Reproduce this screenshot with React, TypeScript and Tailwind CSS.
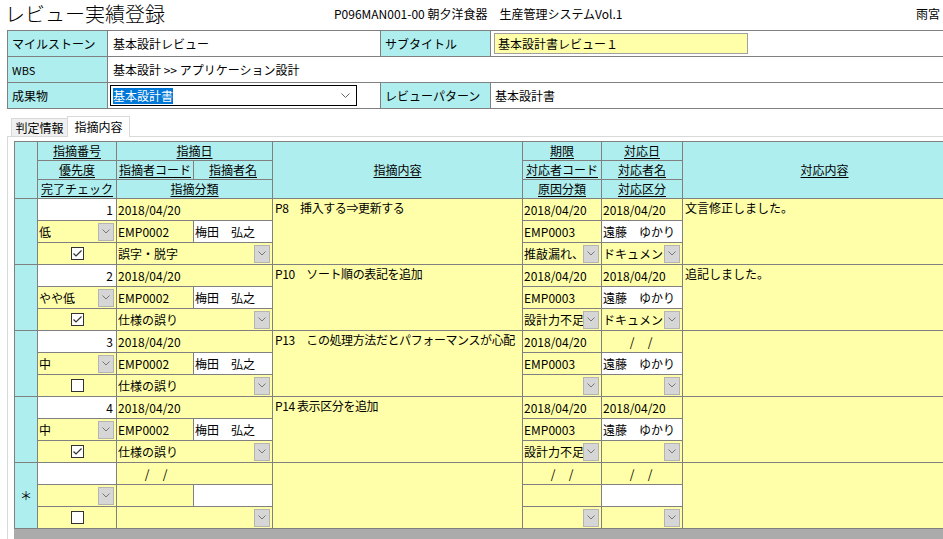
import React from 'react';

type Rec = {
  mark?: string;
  no: string;
  date: string;
  prio: string;
  code: string;
  name: string;
  done: boolean;
  cat: string;
  body: string;
  due: string;
  resDate: string;
  resCode: string;
  resName: string;
  cause: string;
  kind: string;
  answer: string;
};

const records: Rec[] = [
  {
    no: '1', date: '2018/04/20', prio: '低', code: 'EMP0002', name: '梅田　弘之', done: true, cat: '誤字・脱字',
    body: 'P8　挿入する⇒更新する', due: '2018/04/20', resDate: '2018/04/20', resCode: 'EMP0003', resName: '遠藤　ゆかり',
    cause: '推敲漏れ、', kind: 'ドキュメン', answer: '文言修正しました。',
  },
  {
    no: '2', date: '2018/04/20', prio: 'やや低', code: 'EMP0002', name: '梅田　弘之', done: true, cat: '仕様の誤り',
    body: 'P10　ソート順の表記を追加', due: '2018/04/20', resDate: '2018/04/20', resCode: 'EMP0003', resName: '遠藤　ゆかり',
    cause: '設計力不足', kind: 'ドキュメン', answer: '追記しました。',
  },
  {
    no: '3', date: '2018/04/20', prio: '中', code: 'EMP0002', name: '梅田　弘之', done: false, cat: '仕様の誤り',
    body: 'P13　この処理方法だとパフォーマンスが心配', due: '2018/04/20', resDate: '', resCode: 'EMP0003', resName: '遠藤　ゆかり',
    cause: '', kind: '', answer: '',
  },
  {
    no: '4', date: '2018/04/20', prio: '中', code: 'EMP0002', name: '梅田　弘之', done: true, cat: '仕様の誤り',
    body: 'P14 表示区分を追加', due: '2018/04/20', resDate: '2018/04/20', resCode: 'EMP0003', resName: '遠藤　ゆかり',
    cause: '設計力不足', kind: '', answer: '',
  },
  {
    mark: '＊', no: '', date: '', prio: '', code: '', name: '', done: false, cat: '',
    body: '', due: '', resDate: '', resCode: '', resName: '', cause: '', kind: '', answer: '',
  },
];

const cols = 'grid grid-cols-[22px_78px_76px_78px_249px_78px_80px_1fr] gap-px';

function DropButton() {
  return (
    <div className="w-[16px] h-[18px] shrink-0 border border-[#b4b4b4] bg-[#d6d6d6] flex items-center justify-center">
      <svg width="8" height="5" viewBox="0 0 8 5">
        <polyline points="0.5,0.5 4,4 7.5,0.5" fill="none" stroke="#777" strokeWidth="1" />
      </svg>
    </div>
  );
}

function DateText({ value }: { value: string }) {
  if (value) return <span>{value}</span>;
  return (
    <span>
      <span className="invisible">2018</span>/<span className="invisible">04</span>/
    </span>
  );
}

function Cell({ children, white, className = '' }: { children?: React.ReactNode; white?: boolean; className?: string }) {
  return (
    <div className={`${white ? 'bg-white' : 'bg-[#ffffaa]'} flex items-center px-[1px] whitespace-nowrap overflow-hidden ${className}`}>
      {children}
    </div>
  );
}

function SelectCell({ text, className = '' }: { text: string; className?: string }) {
  return (
    <div className={`bg-[#ffffaa] flex items-center pl-[1px] pr-[2px] overflow-hidden ${className}`}>
      <span className="flex-1 overflow-hidden whitespace-nowrap">{text}</span>
      <DropButton />
    </div>
  );
}

function Check({ on }: { on: boolean }) {
  return (
    <div className="w-[13px] h-[13px] border border-[#333] bg-white flex items-center justify-center">
      {on && (
        <svg width="9" height="7" viewBox="0 0 9 7">
          <polyline points="0.5,3.5 3,6 8.5,0.5" fill="none" stroke="#333" strokeWidth="1.2" />
        </svg>
      )}
    </div>
  );
}

function Head({ children, className = '' }: { children?: React.ReactNode; className?: string }) {
  return (
    <div className={`bg-[#afeeee] flex items-center justify-center ${className}`}>
      {children && <span className="underline underline-offset-2">{children}</span>}
    </div>
  );
}

function Record({ r }: { r: Rec }) {
  return (
    <div className={`${cols} grid-rows-[21px_21px_21px]`}>
      <div className="row-span-3 bg-[#afeeee] flex items-center justify-center">{r.mark}</div>
      <Cell white className="justify-end pr-[3px]">{r.no}</Cell>
      <Cell className="col-span-2">
        <DateText value={r.date} />
      </Cell>
      <div className="row-span-3 bg-[#ffffaa] px-[2px] pt-[1px] whitespace-nowrap overflow-hidden tracking-[-0.4px]">{r.body}</div>
      <Cell>
        <DateText value={r.due} />
      </Cell>
      <Cell>
        <DateText value={r.resDate} />
      </Cell>
      <div className="row-span-3 bg-[#ffffaa] px-[2px] pt-[1px] whitespace-nowrap overflow-hidden">{r.answer}</div>

      <SelectCell text={r.prio} />
      <Cell>{r.code}</Cell>
      <Cell white>{r.name}</Cell>
      <Cell>{r.resCode}</Cell>
      <Cell white>{r.resName}</Cell>

      <Cell className="justify-center">
        <Check on={r.done} />
      </Cell>
      <SelectCell text={r.cat} className="col-span-2" />
      <SelectCell text={r.cause} />
      <SelectCell text={r.kind} />
    </div>
  );
}

export default function App() {
  return (
    <div className="w-[943px] h-[539px] overflow-hidden bg-white text-black text-[12px] leading-[16px] font-['Noto_Sans_CJK_JP',sans-serif]">
      {/* title bar */}
      <div className="h-[30px] flex items-start">
        <div className="w-[334px] pl-[5px] pt-[2px] text-[20px] leading-[24px] font-light">レビュー実績登録</div>
        <div className="pt-[6px]">P096MAN001-00 朝夕洋食器　生産管理システムVol.1</div>
        <div className="ml-auto pr-[3px] pt-[6px]">雨宮</div>
      </div>

      {/* header form */}
      <div className="ml-[7px] w-[960px] p-px bg-[#808080] grid grid-cols-[99px_272px_109px_1fr] grid-rows-[25px_25px_25px] gap-px">
        <div className="bg-[#afeeee] flex items-center pl-[4px]">マイルストーン</div>
        <div className="bg-white flex items-center pl-[5px]">基本設計レビュー</div>
        <div className="bg-[#afeeee] flex items-center pl-[4px]">サブタイトル</div>
        <div className="bg-white flex items-center pl-[3px]">
          <div className="w-[254px] h-[21px] border border-[#a0a0a0] bg-[#ffffaa] flex items-center pl-[3px]">
            基本設計書レビュー１
          </div>
        </div>

        <div className="bg-[#afeeee] flex items-center pl-[4px] text-[11px]">WBS</div>
        <div className="col-span-3 bg-white flex items-center pl-[5px]">基本設計 &gt;&gt; アプリケーション設計</div>

        <div className="bg-[#afeeee] flex items-center pl-[4px]">成果物</div>
        <div className="bg-white flex items-center pl-[2px]">
          <div className="w-[247px] h-[21px] border border-black flex items-center pl-[2px] pr-[6px]">
            <span className="bg-[#0078d7] text-white leading-[16px]">基本設計書</span>
            <svg className="ml-auto" width="9" height="5" viewBox="0 0 9 5">
              <polyline points="0.5,0.5 4.5,4.5 8.5,0.5" fill="none" stroke="#666" strokeWidth="1" />
            </svg>
          </div>
        </div>
        <div className="bg-[#afeeee] flex items-center pl-[4px]">レビューパターン</div>
        <div className="bg-white flex items-center pl-[4px]">基本設計書</div>
      </div>

      {/* tabs */}
      <div className="h-[27px] flex items-end pl-[11px]">
        <div className="w-[56px] h-[18px] border-t border-l border-[#d9d9d9] bg-[#f0f0f0] flex items-center justify-center">
          判定情報
        </div>
        <div className="relative w-[63px] h-[21px] -mb-px border-t border-l border-r border-[#d9d9d9] bg-white flex items-center justify-center">
          指摘内容
        </div>
      </div>

      {/* panel */}
      <div className="ml-[7px] w-[960px] h-[420px] border-t border-l border-[#d9d9d9] pt-[4px] pl-[6px]">
        <div className="p-px bg-[#808080] flex flex-col gap-px">
          <div className={`${cols} grid-rows-[18px_18px_18px]`}>
            <Head className="row-span-3" />
            <Head>指摘番号</Head>
            <Head className="col-span-2">指摘日</Head>
            <Head className="row-span-3">指摘内容</Head>
            <Head>期限</Head>
            <Head>対応日</Head>
            <Head className="row-span-3">対応内容</Head>

            <Head>優先度</Head>
            <Head>指摘者コード</Head>
            <Head>指摘者名</Head>
            <Head>対応者コード</Head>
            <Head>対応者名</Head>

            <Head>完了チェック</Head>
            <Head className="col-span-2">指摘分類</Head>
            <Head>原因分類</Head>
            <Head>対応区分</Head>
          </div>
          {records.map((r, i) => (
            <Record key={i} r={r} />
          ))}
        </div>
        <div className="h-[20px] bg-[#ababab]" />
      </div>
    </div>
  );
}
